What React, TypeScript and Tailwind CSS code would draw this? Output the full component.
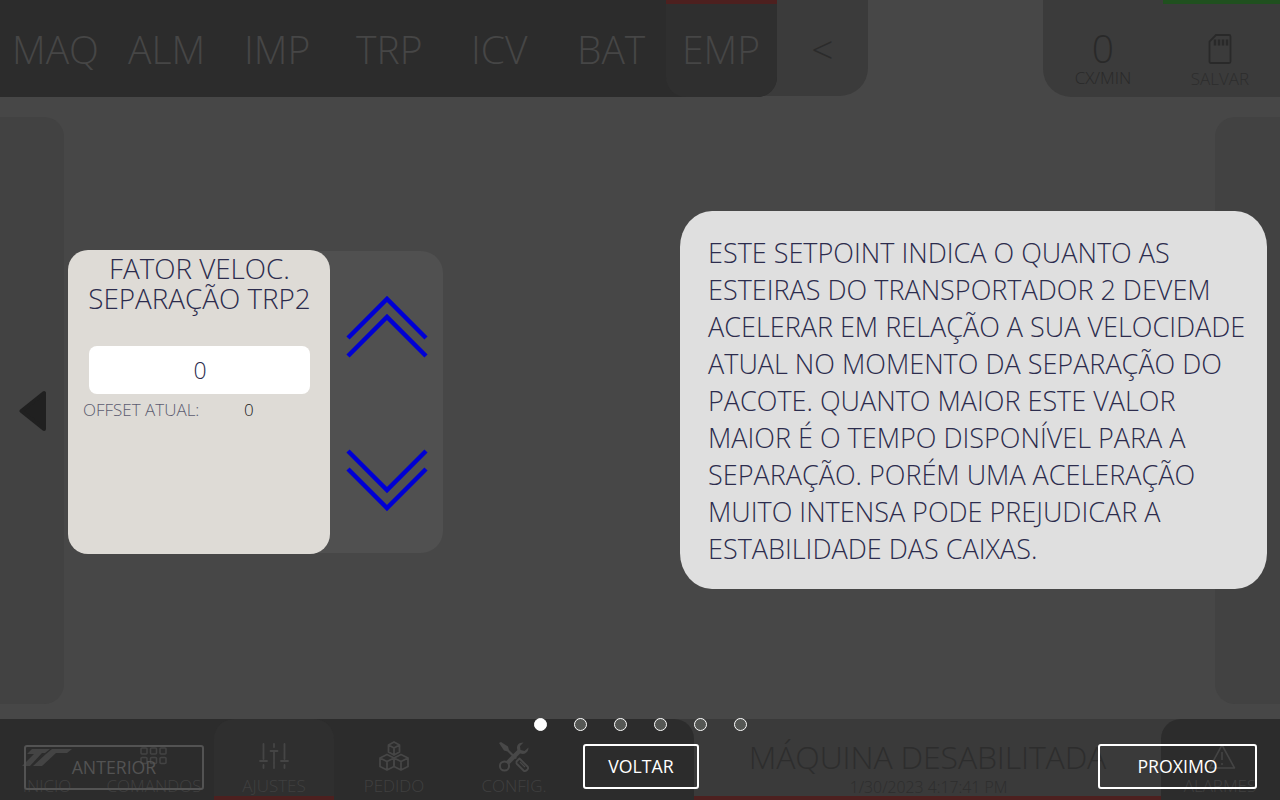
import React from "react";

const tabs = [
  { label: "MAQ", spacing: "pl-3" },
  { label: "ALM", spacing: "pl-[17px]" },
  { label: "IMP", spacing: "pl-[22px]" },
  { label: "TRP", spacing: "pl-[23px]" },
  { label: "ICV", spacing: "pl-[27px]" },
  { label: "BAT", spacing: "pl-[22px]" },
];

const help = [
  "ESTE SETPOINT INDICA O QUANTO AS",
  "ESTEIRAS DO TRANSPORTADOR 2 DEVEM",
  "ACELERAR EM RELAÇÃO A SUA VELOCIDADE",
  "ATUAL NO MOMENTO DA SEPARAÇÃO DO",
  "PACOTE. QUANTO MAIOR ESTE VALOR",
  "MAIOR É O TEMPO DISPONÍVEL PARA A",
  "SEPARAÇÃO. PORÉM UMA ACELERAÇÃO",
  "MUITO INTENSA PODE PREJUDICAR A",
  "ESTABILIDADE DAS CAIXAS.",
];

function Logo() {
  return (
    <svg width="50" height="20" viewBox="0 0 50 20" fill="#444444">
      <path d="M10 1H28L23 5H20L8 18H0L12 6H5Z" />
      <path d="M30 1H50L45 5H34L20 18H11L24 6Z" />
    </svg>
  );
}

function GridIcon() {
  return (
    <svg width="28" height="18" viewBox="0 0 28 18" fill="none" stroke="#434343" strokeWidth="1.6">
      {[1, 10.5, 20].map((x) =>
        [1, 10.5].map((y) => <rect key={`${x}-${y}`} x={x} y={y} width="6" height="6" rx="1" />)
      )}
    </svg>
  );
}

function SlidersIcon() {
  return (
    <svg width="32" height="28" viewBox="0 0 32 28" fill="none" stroke="#454545" strokeWidth="1.800" strokeLinecap="round">
      <path d="M5.500 2V17M2 19H9M5.500 23V26M16 2V5M12.500 9H19.500M16 9V26M26.500 2V17M23 19H30M26.500 23V26" />
    </svg>
  );
}

function BoxesIcon() {
  return (
    <svg width="32" height="32" viewBox="0 0 32 32" fill="none" stroke="#464646" strokeWidth="1.8" strokeLinejoin="round">
      <path d="M16 2L21.500 5V12L16 15L10.500 12V5ZM10.500 5L16 8L21.500 5M16 8V15" />
      <path d="M9 14.500L16 18V26.500L9 30L2 26.500V18ZM2 18L9 21.500L16 18M9 21.500V30" />
      <path d="M23 14.500L30 18V26.500L23 30L16 26.500V18ZM16 18L23 21.500L30 18M23 21.500V30" />
    </svg>
  );
}

function ToolsIcon() {
  return (
    <svg width="32" height="32" viewBox="0 0 32 32" fill="none" stroke="#484848">
      <circle cx="6.500" cy="25" r="4.600" strokeWidth="2" />
      <path d="M9.500 22L22 9.500" strokeWidth="4.500" />
      <path d="M25.500 1.500C20 1.500 18 5 19.500 9.500L22.500 12.500C27 14 30.500 11 30.500 6.500L26.500 10L22.500 9L22 5Z" fill="#484848" stroke="none" />
      <path d="M1 2L3 1L10 5.500L11 9L19 17L17 18L9.500 10.500L6 9.500Z" fill="#484848" stroke="none" />
      <path d="M18.500 20.500L21.500 17.500L29.500 25.500Q31 27 29 29Q27 31 25.500 29.500L18.500 22.500Z" strokeWidth="1.800" strokeLinejoin="round" />
      <path d="M22 21L27 26" strokeWidth="1.200" />
    </svg>
  );
}

function Chevrons({ down = false }: { down?: boolean }) {
  return (
    <svg
      width="84"
      height="64"
      viewBox="0 0 84 64"
      fill="none"
      stroke="#0000d4"
      strokeWidth="4.500"
      className={down ? "rotate-180" : ""}
    >
      <path d="M3 43L42 4L81 43M3 61L42 22L81 61" />
    </svg>
  );
}

function NavItem({ label, className, children }: { label: string; className: string; children: React.ReactNode }) {
  return (
    <div className={`flex shrink-0 flex-col items-center ${className}`}>
      <div className="flex h-[55px] shrink-0 items-end justify-center">{children}</div>
      <span className="h-[22px] text-[17px] leading-[24px] whitespace-nowrap text-[#404040]">{label}</span>
    </div>
  );
}

function Machine() {
  return (
    <div className="flex h-[800px] w-[1280px] flex-col bg-[#474747]">
      <header className="flex h-[97px] items-start justify-between">
        <div className="flex h-[96px] w-[868px] rounded-br-[28px] bg-[#3b3b3b]">
          <div className="flex h-[97px] w-[777px] shrink-0 rounded-br-[20px] bg-[#2c2c2c] text-[39px] leading-[98px] text-[#464646]">
            {tabs.map((t) => (
              <div key={t.label} className={`w-[111px] shrink-0 ${t.spacing}`}>
                {t.label}
              </div>
            ))}
            <div className="h-full w-[111px] rounded-br-[20px] rounded-bl-[20px] border-t-4 border-[#4d201f] bg-[#2f2f2f] pl-4 leading-[90px]">
              EMP
            </div>
          </div>
          <div className="flex flex-1 justify-center text-[39px] leading-[98px] text-[#2b2b2b]">&lt;</div>
        </div>
        <div className="flex h-full w-[237px] rounded-bl-[28px] bg-[#3b3b3b] text-[#292929]">
          <div className="flex w-[120px] flex-col items-center">
            <span className="mt-[28px] text-[39px] leading-[40px]">0</span>
            <span className="mt-px text-[17px] leading-[18px]">CX/MIN</span>
          </div>
          <div className="flex flex-1 flex-col items-center border-t-4 border-[#20501f] pr-[3px]">
            <svg className="mt-[29px]" width="24" height="32" viewBox="0 0 24 32" fill="none" stroke="#292929" strokeWidth="1.800">
              <path d="M8 2H21Q22.500 2 22.500 3.500V28.500Q22.500 30 21 30H3Q1.500 30 1.500 28.500V8.500Z" />
              <path d="M7 6.500V12.500M11 6.500V12.500M15 6.500V12.500M19 6.500V12.500" strokeWidth="2.500" />
            </svg>
            <span className="mt-[2px] text-[17px] leading-[24px] text-[#2d2d2d]">SALVAR</span>
          </div>
        </div>
      </header>
      <div className="flex h-[622px] items-start justify-between pt-5">
        <div className="flex h-[587px] w-[64px] items-center rounded-r-[20px] bg-[#424242] pl-[19px]">
          <svg width="27" height="42" viewBox="0 0 27 42" fill="#202020" stroke="#202020" strokeWidth="4" strokeLinejoin="round">
            <path d="M2.500 21L25 3V39Z" />
          </svg>
        </div>
        <div className="h-[587px] w-[65px] rounded-l-[20px] bg-[#424242]" />
      </div>
      <footer className="flex h-[81px] bg-[#3a3a3a]">
        <div className="flex w-[694px] shrink-0 rounded-tr-[20px] bg-[#2c2c2c]">
          <NavItem label="INICIO" className="w-[94px]">
            <div className="flex h-[30px] items-start pt-1">
              <Logo />
            </div>
          </NavItem>
          <NavItem label="COMANDOS" className="w-[120px]">
            <div className="h-[30px] pt-[3px]">
              <GridIcon />
            </div>
          </NavItem>
          <NavItem label="AJUSTES" className="w-[120px] rounded-t-[20px] border-b-4 border-[#4d201f] bg-[#2f2f2f]">
            <div className="pb-[4px]">
              <SlidersIcon />
            </div>
          </NavItem>
          <NavItem label="PEDIDO" className="w-[120px]">
            <div className="pb-[2px]">
              <BoxesIcon />
            </div>
          </NavItem>
          <NavItem label="CONFIG." className="w-[120px]">
            <div className="pb-[1px]">
              <ToolsIcon />
            </div>
          </NavItem>
        </div>
        <div className="flex w-[467px] shrink-0 flex-col items-center border-b-4 border-[#4d201f] text-[#2d2d2d]">
          <span className="mt-4 text-[32px] leading-[44px] tracking-[-0.15px] whitespace-nowrap">MÁQUINA DESABILITADA</span>
          <span className="pl-[2px] text-[15.8px] leading-[17px]">1/30/2023 4:17:41 PM</span>
        </div>
        <div className="flex flex-1 rounded-tl-[20px] bg-[#2c2c2c]">
          <NavItem label="ALARMES" className="w-[118px]">
            <div className="pb-[3px] pl-[3px]">
              <svg width="30" height="28" viewBox="0 0 30 28" fill="none" stroke="#444444" strokeWidth="1.600" strokeLinejoin="round">
                <path d="M15 2L27.500 25H2.500ZM15 9V17M15 20V22" />
              </svg>
            </div>
          </NavItem>
        </div>
      </footer>
    </div>
  );
}

export default function App() {
  return (
    <main className="relative h-[800px] w-[1280px] overflow-hidden font-['Open_Sans',sans-serif] font-light">
      <Machine />
      <section className="absolute top-[250px] left-[68px] flex h-[304px] w-[375px] items-center">
        <div className="z-10 h-full w-[262px] shrink-0 rounded-[20px] bg-[#dedbd6] text-[#2c2c4d]">
          <h1 className="pt-[3px] pl-px text-center text-[27.8px] leading-[30px] font-light whitespace-nowrap">
            FATOR VELOC.
            <br />
            SEPARAÇÃO TRP2
          </h1>
          <div className="mt-[33px] ml-[21px] h-[48px] w-[221px] rounded-lg bg-white pl-[1px] text-center text-[23px] leading-[49px]">
            0
          </div>
          <div className="flex pl-[15px] text-[17px] leading-[32px]">
            <span className="w-[161px] text-[#5c5c70]">OFFSET ATUAL:</span>
            <span className="text-[#202020]">0</span>
          </div>
        </div>
        <div className="-ml-6 flex h-[302px] flex-1 flex-col items-center justify-between rounded-r-[22px] bg-[#505050] pt-[44px] pb-[41px] pl-6">
          <Chevrons />
          <Chevrons down />
        </div>
      </section>
      <aside className="absolute top-[211px] left-[680px] h-[378px] w-[587px] rounded-[32px/36px] bg-[#dfdfdf] pt-[23px] pl-[28px] text-[27px] leading-[37px] text-[#2c2c4d]">
        {help.map((line) => (
          <div key={line} className="whitespace-nowrap">
            {line}
          </div>
        ))}
      </aside>
      <div className="absolute top-[718px] left-[534px] flex gap-[27.1px]">
        {[0, 1, 2, 3, 4, 5].map((i) => (
          <span key={i} className={`h-[13px] w-[13px] rounded-full border border-white ${i ? "bg-[#555754]" : "bg-white"}`} />
        ))}
      </div>
      <nav className="absolute top-[744px] left-[24px] flex h-[46px] w-[1233px] items-start text-[17.7px] leading-[38px] font-normal text-white">
        <button className="mt-px flex h-[45px] w-[180px] justify-center rounded-[3px] border-2 border-[#535353] text-[#535353]">
          <span className="pt-px">ANTERIOR</span>
        </button>
        <button className="ml-[379px] flex h-[45px] w-[116px] justify-center rounded-[3px] border-2 border-white">
          <span className="pt-px">VOLTAR</span>
        </button>
        <button className="ml-[399px] flex h-[45px] w-[159px] justify-center rounded-[3px] border-2 border-white">
          <span className="pt-px">PROXIMO</span>
        </button>
      </nav>
    </main>
  );
}
